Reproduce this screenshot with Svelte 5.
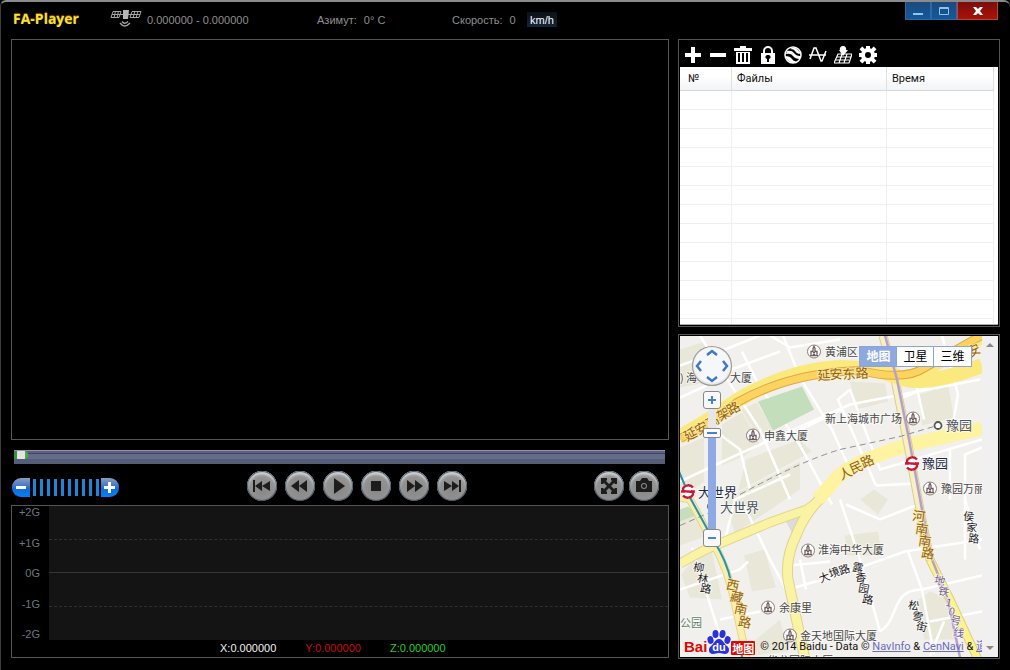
<script>
  let seek = $state(0);
  let volume = $state(100);
  let zoom = $state(83);
  let mapType = $state('地图');

  const rows = Array.from({ length: 12 }, (_, i) => i);
  const mapTypes = ['地图', '卫星', '三维'];
  const axis = ['+2G', '+1G', '0G', '-1G', '-2G'];
  const readings = [
    { text: 'X:0.000000', tone: 'x' },
    { text: 'Y:0.000000', tone: 'y' },
    { text: 'Z:0.000000', tone: 'z' }
  ];

  const tools = [
    { name: 'Добавить', d: 'M7 1h4v6h6v4h-6v6H7v-6H1V7h6z' },
    { name: 'Убрать', d: 'M1 7h16v4H1z' },
    {
      name: 'Удалить',
      d: 'M0 2h6V0h6v2h6v3H0zM2 6h14v12H2zM4 7v9h2V7zM8 7v9h2V7zM12 7v9h2V7z'
    },
    {
      name: 'Защитить',
      d: 'M2 7h2V5a5 5 0 0 1 10 0v2h2v11H2zM6 7h6V5a3 3 0 0 0-6 0zM9 9a2 2 0 0 0-1 4v3h2v-3a2 2 0 0 0-1-4z'
    },
    { name: 'Карта', kind: 'globe' },
    { name: 'График', kind: 'wave' },
    { name: 'Маршрут', kind: 'route' },
    { name: 'Настройки', kind: 'gear' }
  ];

  const transport = [
    { name: 'В начало', d: 'M6 9h2v12H6zM15 10v10l-7-5zM23 10v10l-8-5z' },
    { name: 'Назад', d: 'M14 9v12l-8-6zM22 9v12l-8-6z' },
    { name: 'Пуск', d: 'M11 7l11 8-11 8z' },
    { name: 'Стоп', d: 'M10 10h10v10H10z' },
    { name: 'Вперёд', d: 'M8 9l8 6-8 6zM16 9l8 6-8 6z' },
    { name: 'В конец', d: 'M7 10l8 5-8 5zM15 10l7 5-7 5zM22 9h2v12h-2z' }
  ];

  const extras = [
    {
      name: 'Во весь экран',
      d: 'M7 7h6v2l-1 1 3 3 3-3-1-1V7h6v6h-2l-1-1-3 3 3 3 1-1h2v6h-6v-2l1-1-3-3-3 3 1 1v2H7v-6h2l1 1 3-3-3-3-1 1H7z'
    },
    {
      name: 'Снимок',
      d: 'M7 10h4l2-3h5l2 3h3v11H7zM15 12a3 3 0 1 0 0 6 3 3 0 0 0 0-6zM15 13a2 2 0 1 1 0 4 2 2 0 0 1 0-4z'
    }
  ];

  const blocks = [
    '680,350 705,342 728,372 700,384 680,388',
    '741,410 757,403 775,434 760,440',
    '722,425 742,413 760,444 745,456 722,466',
    '680,448 704,438 704,482 680,500',
    '746,460 800,440 812,452 738,492',
    '724,500 800,462 800,490 735,534',
    '920,395 948,385 954,418 922,426',
    '860,500 874,490 888,500 878,515',
    '845,536 878,532 882,556 846,556',
    '681,575 694,560 712,552 722,600 690,598',
    '744,556 764,550 776,588 752,592',
    '680,512 700,508 708,536 680,546',
    '918,600 930,592 945,598 958,640 924,640',
    '850,382 885,384 888,402 856,410',
    '756,640 780,620 788,652 756,656'
  ];

  const streets = [
    'M680 366L730 348L760 336', 'M700 336L722 372L760 430L790 500', 'M680 398L720 380',
    'M742 352L758 384L800 446L832 505', 'M726 372L780 352', 'M783 336L800 378L832 430L850 470',
    'M680 482L740 454L850 405L980 380', 'M780 440L842 410', 'M850 390L880 470L982 440',
    'M850 390L838 400L876 486', 'M942 336L958 395L950 440', 'M903 398L980 366', 'M916 384L924 420',
    'M840 380L900 360', 'M840 500L860 560L880 632', 'M788 590L840 575L905 552L982 540',
    'M744 506L770 560L786 590', 'M880 632C900 620 890 590 922 590L982 576',
    'M876 486L916 484', 'M950 450L950 500M982 448L965 455L965 560', 'M965 500L980 550',
    'M930 622L982 612', 'M692 548L718 630L735 650', 'M680 590L740 570L748 562',
    'M720 620L760 612', 'M908 552L922 590L934 655', 'M944 622L930 656', 'M800 560L806 590',
    'M790 566L830 562', 'M725 540L735 500L790 475', 'M846 505L880 520L918 505',
    'M770 336L790 348L840 340', 'M700 420L740 450L750 490'
  ];

  const pois = [
    [814, 352], [753, 436], [913, 419], [808, 551], [790, 636], [768, 608], [930, 489]
  ];

  const places = [
    { t: '黄浦区', x: 825, y: 356 },
    { t: '海', x: 686, y: 382 },
    { t: '大厦', x: 730, y: 382 },
    { t: '申鑫大厦', x: 764, y: 440 },
    { t: '新上海城市广场', x: 825, y: 423 },
    { t: '豫园万丽', x: 941, y: 493 },
    { t: '淮海中华大厦', x: 818, y: 554 },
    { t: '余康里', x: 779, y: 612 },
    { t: '金天地国际大厦', x: 800, y: 640 },
    { t: '华龙国际大厦', x: 767, y: 665 },
    { t: '公园', x: 680, y: 627, c: 'park' }
  ];

  const stations = [
    { t: '豫园', x: 946, y: 430, c: 'soft' },
    { t: '豫园', x: 922, y: 468 },
    { t: '大世界', x: 698, y: 497 },
    { t: '大世界', x: 720, y: 512, c: 'soft' }
  ];

  // Street names drawn one sign after another along the road.
  const roadNames = [
    { c: 'major', r: -29, s: [['延', 690, 434], ['安', 701, 428], ['高', 712, 421], ['架', 723, 414], ['路', 733, 408]] },
    { c: 'major', r: -3, s: [['延', 824, 375], ['安', 836, 374], ['东', 849, 374], ['路', 862, 373]] },
    { c: 'major', r: -24, s: [['人', 845, 473], ['民', 856, 467], ['路', 867, 461]] },
    { c: 'major', r: 8, s: [['河', 919, 516], ['南', 922, 529], ['南', 925, 541], ['路', 928, 553]] },
    { c: 'major', r: 12, s: [['西', 733, 585], ['藏', 737, 597], ['南', 741, 609], ['路', 745, 622]] },
    { c: 'minor', r: 10, s: [['柳', 699, 567], ['林', 703, 578], ['路', 706, 588]] },
    { c: 'minor', r: -20, s: [['大', 824, 577], ['境', 834, 572], ['路', 844, 569]] },
    { c: 'minor', r: 10, s: [['露', 858, 567], ['香', 861, 577], ['园', 864, 588], ['路', 868, 599]] },
    { c: 'minor', r: 5, s: [['侯', 969, 516], ['家', 972, 527], ['路', 974, 538]] },
    { c: 'minor', r: 12, s: [['松', 914, 605], ['雪', 918, 616], ['街', 922, 626]] },
    { c: 'metro', r: 12, s: [['地', 940, 580], ['铁', 944, 591], ['1', 949, 602], ['0', 952, 611], ['号', 956, 620], ['线', 959, 632]] }
  ];
</script>

<main class="window">
  <header>
    <h1>FA-Player</h1>
    <div class="gps">
      <svg width="32" height="18" viewBox="0 0 32 18" aria-hidden="true">
        <g fill="none" stroke="#a4a4a4">
          <path d="M3 2.500h8l-2 6H1zM2 5.500h8M5.500 2L4 9M8.500 2L7 9M22 2.500h9l-2 6h-9zM21 5.500h9M25 2l-2 7M28 2l-2 7" />
          <path d="M10 5.500h11" />
          <path d="M10 14Q14.500 20 20 14M12 12.500Q14.500 16 18 12.500" stroke-width="1.300" />
        </g>
        <path d="M13 1h6l-1 9h-5z" fill="#b5b5b5" />
      </svg>
      <span>0.000000 - 0.000000</span>
    </div>
    <p class="azimuth"><span>Азимут:</span><span>0° C</span></p>
    <p class="speed"><label for="unit">Скорость:</label><span>0</span></p>
    <select id="unit"><option>km/h</option><option>mph</option></select>
    <div class="winbuttons">
      <button type="button" aria-label="Свернуть">
        <svg width="12" height="10" viewBox="0 0 12 10"><path d="M1 7h10v2H1z" fill="#8fc4ee" /></svg>
      </button>
      <button type="button" aria-label="Развернуть">
        <svg width="12" height="10" viewBox="0 0 12 10"><path d="M1.500 1.500h9v7h-9zM1 2.500h10" fill="none" stroke="#8fc4ee" /></svg>
      </button>
      <button type="button" class="close" aria-label="Закрыть">
        <svg width="12" height="10" viewBox="0 0 12 10"><path d="M1 1h3l2 2 2-2h3L8 5l3 4H8L6 7 4 9H1l3-4z" fill="#fff" /></svg>
      </button>
    </div>
  </header>

  <div class="columns">
    <section class="left">
      <div class="video frame"></div>

      <input class="seek" type="range" aria-label="Позиция" min="0" max="100" bind:value={seek} />

      <div class="controls">
        <div class="volume">
          <button type="button" class="vol down" aria-label="Тише">
            <svg width="18" height="19" viewBox="0 0 18 19"><path d="M4 8h10v3H4z" fill="#fff" /></svg>
          </button>
          <input type="range" aria-label="Громкость" min="0" max="100" bind:value={volume} />
          <button type="button" class="vol up" aria-label="Громче">
            <svg width="18" height="19" viewBox="0 0 18 19"><path d="M7 4h3v4h4v3h-4v4H7v-4H3V8h4z" fill="#fff" /></svg>
          </button>
        </div>
        <div class="transport">
          {#each transport as b}
            <button type="button" class="round" aria-label={b.name}>
              <svg width="30" height="30" viewBox="0 0 30 30"><path d={b.d} /></svg>
            </button>
          {/each}
        </div>
        <div class="extras">
          {#each extras as b}
            <button type="button" class="round" aria-label={b.name}>
              <svg width="30" height="30" viewBox="0 0 30 30"><path fill-rule="evenodd" d={b.d} /></svg>
            </button>
          {/each}
        </div>
      </div>

      <div class="graph frame">
        <div class="axis">
          {#each axis as a}<span>{a}</span>{/each}
        </div>
        <div class="plot"><i></i><i class="zero"></i><i></i><i class="end"></i></div>
        <div class="readings">
          {#each readings as r}<span class={r.tone}>{r.text}</span>{/each}
        </div>
      </div>
    </section>

    <aside class="right">
      <div class="files frame">
        <div class="tools">
          {#each tools as t}
            <button type="button" aria-label={t.name}>
              <svg width="18" height="18" viewBox="0 0 18 18">
                {#if t.kind === 'globe'}
                  <circle cx="9" cy="9" r="8" fill="none" stroke="#fff" stroke-width="1.500" />
                  <path d="M3 5Q8 4 10 7T16 10V13Q11 13 9 10T2 8zM8 2Q12 1 14 4T17 7L15 8Q12 7 11 5T6 3zM1 10Q6 10 8 13T13 15L9 17Q4 16 1 10z" fill="#fff" />
                {:else if t.kind === 'wave'}
                  <path d="M0 9h17M1 13L5 2h2L12 15h1L17 5" fill="none" stroke="#fff" stroke-width="1.500" />
                {:else if t.kind === 'route'}
                  <path d="M4 8h14l-3 9H0zM3 11h14M1 14h14M8 8l-3 9M13 8l-3 9" fill="none" stroke="#fff" stroke-width="1.200" />
                  <path d="M9 0a3 3 0 0 1 3 4h2L9 10 5 4h1a3 3 0 0 1 3-4z" fill="#fff" />
                {:else if t.kind === 'gear'}
                  <g fill="#fff">
                    <path d="M7 0h4v18H7zM0 7h18v4H0z" />
                    <path d="M7 -1h4v20H7zM-1 7h20v4H-1z" transform="rotate(45 9 9)" />
                    <circle cx="9" cy="9" r="7" />
                  </g>
                  <circle cx="9" cy="9" r="3" fill="#000" />
                {:else}
                  <path fill="#fff" fill-rule="evenodd" d={t.d} />
                {/if}
              </svg>
            </button>
          {/each}
        </div>
        <div class="list">
          <table>
            <colgroup><col class="num" /><col /><col class="time" /></colgroup>
            <thead><tr><th>№</th><th>Файлы</th><th>Время</th></tr></thead>
            <tbody>
              {#each rows as r (r)}<tr><td></td><td></td><td></td></tr>{/each}
              <tr class="rest"><td></td><td></td><td></td></tr>
            </tbody>
          </table>
        </div>
      </div>

      <div class="map frame">
        <div class="canvas">
          <svg class="drawing" viewBox="680 336 302 322" preserveAspectRatio="xMidYMid slice" role="img" aria-label="豫园">
            <rect x="680" y="336" width="302" height="322" fill="#f2f0ed" />
            {#each blocks as b}<polygon points={b} fill="#e9e7d8" />{/each}
            <polygon points="680,510 688,507 698,515 680,522" fill="#c5dfbd" />
            <polygon points="782,515 800,514 803,525 794,537" fill="#dedcda" />
            {#each streets as s}<path d={s} fill="none" stroke="#fff" stroke-width="2.500" />{/each}
            <polygon points="758,402 802,387 814,410 773,431" fill="#c3debb" />

            <g fill="none">
              <path d="M680 564Q704 550 722 543L770 523Q795 514 807 510L822 499" stroke="#e0d693" stroke-width="10" />
              <path d="M680 498L690 500L713 543Q728 570 734 600L747 660" stroke="#e0d693" stroke-width="8" />
              <path d="M982 430L914 444Q860 459 838 477L820 499Q804 516 797 534Q785 558 788 580L805 660" stroke="#ddd28f" stroke-width="11" />
              <path d="M680 564Q704 550 722 543L770 523Q795 514 807 510L822 499" stroke="#fbf3a4" stroke-width="8" />
              <path d="M680 498L690 500L713 543Q728 570 734 600L747 660" stroke="#faefaa" stroke-width="6" />
              <path d="M820 499Q804 516 797 534Q785 558 788 580L805 660" stroke="#fbf3a4" stroke-width="9" />
              <path d="M982 429L914 444Q860 459 838 477L818 500" stroke="#fdf3a0" stroke-width="14" />
              <path d="M883 336L895 380L907 440L920 510L930 560L950 600L978 660" stroke="#d9cd92" stroke-width="9" />
              <path d="M883 336L895 380L907 440L920 510L930 560" stroke="#f7f0c4" stroke-width="7" />
              <path d="M930 560L950 600L978 660" stroke="#fdf388" stroke-width="7" />

              <path d="M680 437Q705 424 737 401Q790 370 840 368Q875 368 900 378T982 366" stroke="#fbe97d" stroke-width="15" />
              <path d="M900 378Q925 374 945 360L986 336" stroke="#fbe97d" stroke-width="12" />
              <path d="M680 439Q708 426 737 403Q790 373 860 371Q905 382 925 368L985 334" stroke="#dca843" stroke-width="9" />
              <path d="M680 439Q708 426 737 403Q790 373 860 371Q905 382 925 368L985 334" stroke="#fcd35f" stroke-width="7" />

              <path d="M885 336L897 380L909 440L922 510L932 560L948 600L960 658" stroke="#b6a0cb" stroke-width="2.500" />
              <path d="M740 495Q800 462 840 450L900 437L934 427" stroke="#8f8f8f" stroke-dasharray="6 4" />
              <path d="M680 526L712 512" stroke="#8f8f8f" stroke-dasharray="6 4" />
              <path d="M679 472L690 498L713 540Q727 562 731 582M741 645L742 660" stroke="#2291b5" stroke-width="2" />
            </g>

            {#each pois as [x, y]}
              <g transform="translate({x} {y})">
                <circle r="6.500" fill="#fff" stroke="#8d7e7c" />
                <path d="M-4 4h8M-3 3v-3h2v-3l1-2 1 2v3h2v3M-1 1h2M-1 3h2" fill="none" stroke="#6f5c5b" stroke-width="1.300" />
              </g>
            {/each}
            <circle cx="938" cy="426" r="3.500" fill="#fff" stroke="#555" stroke-width="1.800" />
            <circle cx="711" cy="507" r="3" fill="#fff" stroke="#555" stroke-width="1.800" />
            {#each [[912, 464], [688, 492]] as [x, y]}
              <g transform="translate({x} {y})">
                <circle r="7" fill="#fff" />
                <path d="M5 -4A6 6 0 0 0 -5 -3Q-6 0 0 0T5 3A6 6 0 0 1 -5 4M-7 0H-3M3 0H7" fill="none" stroke="#ca1837" stroke-width="2.300" />
              </g>
            {/each}

            {#each places as p}<text class="place {p.c ?? ''}" x={p.x} y={p.y}>{p.t}</text>{/each}
            {#each stations as p}<text class="station {p.c ?? ''}" x={p.x} y={p.y}>{p.t}</text>{/each}
            {#each roadNames as n}
              {#each n.s as [ch, x, y]}
                <text class="road {n.c}" text-anchor="middle" dominant-baseline="central" transform="translate({x} {y}) rotate({n.r})">{ch}</text>
              {/each}
            {/each}
            <text class="place" x="680" y="382">)</text>
            <text class="road major" x="967" y="355" transform="rotate(-25 975 350)">安</text>
          </svg>

          <div class="nav">
            <button type="button" class="pan" aria-label="Сдвинуть карту">
              <svg width="40" height="40" viewBox="0 0 40 40">
                <path d="M15 9l5-4 5 4M15 31l5 4 5-4M9 15l-4 5 4 5M31 15l4 5-4 5" fill="none" stroke="#3f75d0" stroke-width="2.500" />
              </svg>
            </button>
            <button type="button" class="step" aria-label="Приблизить">
              <svg width="16" height="16" viewBox="0 0 16 16"><path d="M4 8h8M8 4v8" stroke="#4a80da" stroke-width="2" /></svg>
            </button>
            <input type="range" aria-label="Масштаб" min="0" max="100" bind:value={zoom} />
            <button type="button" class="step" aria-label="Отдалить">
              <svg width="16" height="16" viewBox="0 0 16 16"><path d="M4 8h8" stroke="#4a80da" stroke-width="2" /></svg>
            </button>
          </div>

          <div class="types">
            {#each mapTypes as t}
              <button type="button" class:on={mapType === t} onclick={() => (mapType = t)}>{t}</button>
            {/each}
          </div>

          <div class="credit">
            <span class="logo">
              <b>Bai</b>
              <svg width="24" height="26" viewBox="0 0 24 26" aria-hidden="true">
                <g fill="#2a32d8">
                  <ellipse cx="3.500" cy="11" rx="3" ry="4" transform="rotate(-15 3.500 11)" />
                  <ellipse cx="8.500" cy="5" rx="3" ry="4" />
                  <ellipse cx="15.500" cy="5" rx="3" ry="4" transform="rotate(10 15.500 5)" />
                  <ellipse cx="20.500" cy="11" rx="3" ry="4" transform="rotate(15 20.500 11)" />
                  <path d="M12 10c4 0 5 5 8 7s3 8-2 8c-3 0-3-1-6-1s-3 1-6 1c-5 0-5-6-2-8s4-7 8-7z" />
                </g>
                <text x="12" y="22" text-anchor="middle" class="du">du</text>
              </svg>
              <b class="tag">地图</b>
            </span>
            <span class="legal">© 2014 Baidu - Data © <a href="#navinfo">NavInfo</a> &amp; <a href="#cennavi">CenNavi</a> &amp; <a href="#dao">道</a></span>
          </div>
        </div>
        <div class="scroll" aria-hidden="true"><i class="upper"></i><i class="lower"></i></div>
      </div>
    </aside>
  </div>
</main>

<style>
  :global(body) {
    margin: 0;
    background: #000;
  }

  .window {
    box-sizing: border-box;
    min-height: 100vh;
    display: flex;
    flex-direction: column;
    padding: 0 10px 11px;
    background: #000;
    border-top: 2px solid #8b8b8b;
    border-left: 1px solid #3c3c3c;
    border-radius: 6px 6px 0 0;
    color: #8f8f8f;
    font: 11px/14px "Liberation Sans", "Noto Sans CJK SC", sans-serif;
  }

  button,
  select,
  input {
    margin: 0;
    padding: 0;
    border: 0;
    background: none;
    font: inherit;
    color: inherit;
  }

  button {
    display: flex;
    align-items: center;
    justify-content: center;
  }

  svg {
    display: block;
    flex: none;
  }

  .frame {
    box-sizing: border-box;
    border: 1px solid #555;
  }

  header {
    display: flex;
    align-items: flex-start;
    height: 37px;
  }

  h1 {
    width: 99px;
    margin: 0;
    padding: 9px 0 0 2px;
    box-sizing: border-box;
    font: bold 14px/16px "Open Sans", "Noto Sans", sans-serif;
    color: #f3e42b;
    text-shadow: 0 -1px 1px #9c4a00;
  }

  .gps {
    display: flex;
    gap: 5px;
    width: 207px;
    padding-top: 7px;
  }

  .gps span {
    padding-top: 4px;
  }

  header p {
    display: flex;
    gap: 7px;
    margin: 0;
    padding-top: 11px;
  }

  .azimuth {
    width: 135px;
  }

  .speed {
    width: 75px;
  }

  select {
    appearance: none;
    width: 30px;
    height: 15px;
    margin-top: 10px;
    padding: 0 3px;
    background: linear-gradient(#0c1116, #12263a);
    color: #fff;
  }

  .winbuttons {
    display: flex;
    margin: 0 2px 0 auto;
  }

  .winbuttons button {
    box-sizing: border-box;
    width: 26px;
    height: 18px;
    background: linear-gradient(#1c4a7c, #14589b);
    border: 1px solid #2d6aa2;
    border-top: 0;
  }

  .winbuttons .close {
    width: 41px;
    background: linear-gradient(#7c0c0c, #a81408);
    border-color: #b5453a;
  }

  .columns {
    flex: 1;
    display: grid;
    grid-template-columns: minmax(0, 1fr) 322px;
    gap: 9px;
  }

  .left,
  .right {
    display: flex;
    flex-direction: column;
    min-width: 0;
  }

  .left {
    padding-bottom: 1px;
  }

  .video {
    flex: 1;
    min-height: 200px;
  }

  .seek {
    appearance: none;
    display: block;
    height: 14px;
    margin: 10px 4px 7px 3px;
    background: linear-gradient(#9093b2 0 1px, #5d6080 1px 3px, #41445f 3px 4px, #646c88 4px 9px, #555d77 9px);
  }

  .seek::-webkit-slider-thumb {
    appearance: none;
    width: 14px;
    height: 8px;
    margin-bottom: 4px;
    border: 0;
    border-radius: 4px;
    background: linear-gradient(90deg, #2f9b31 0 3px, #e4e4e4 3px 11px, #45b03c 11px);
  }

  .controls {
    display: grid;
    grid-template-columns: 236px 1fr auto;
    align-items: center;
    height: 30px;
    margin-bottom: 4px;
  }

  .volume {
    display: flex;
    padding-left: 1px;
    margin-top: 2px;
  }

  .vol {
    width: 18px;
    height: 19px;
    background: linear-gradient(#8b9dc0, #3d74c8 45%, #0a6fe0 55%, #0b7ff0);
  }

  .down {
    border-radius: 9px 0 0 9px;
  }

  .up {
    border-radius: 0 9px 9px 0;
  }

  .volume input {
    appearance: none;
    box-sizing: border-box;
    width: 71px;
    height: 19px;
    padding: 0 3px;
    background: repeating-linear-gradient(90deg, #1d86d8 0 3px, transparent 3px 7px) 3px 1px / 66px 17px no-repeat;
  }

  .volume input::-webkit-slider-thumb {
    appearance: none;
    width: 3px;
    height: 17px;
  }

  .transport {
    display: flex;
    gap: 8px;
  }

  .extras {
    display: flex;
    gap: 5px;
    padding-right: 10px;
  }

  .round {
    width: 30px;
    height: 30px;
    border-radius: 50%;
    background: radial-gradient(circle at 50% 60%, #868686, #949494 55%, #bdbdbd 85%, #8aa0b4);
    box-shadow: inset 0 0 1px 1px #3c5264, inset 0 3px 3px #ddd;
  }

  .round path {
    fill: #1d1d1d;
  }

  .graph {
    display: grid;
    grid-template: 134px 17px / 37px 1fr;
  }

  .axis {
    display: flex;
    flex-direction: column;
    justify-content: space-between;
    align-items: flex-end;
    padding-right: 9px;
    margin: -1px 0;
    color: #6f7681;
  }

  .plot {
    display: flex;
    flex-direction: column;
    background: #141414;
  }

  .plot i {
    flex: 1;
    border-bottom: 1px dashed #303030;
  }

  .plot .zero {
    border-bottom: 1px solid #363636;
  }

  .plot .end {
    border-bottom-color: transparent;
  }

  .readings {
    grid-column: 1 / -1;
    display: flex;
    gap: 29px;
    padding: 1px 0 0 208px;
  }

  .x {
    color: #f2f2f2;
  }

  .y {
    color: #c30d12;
  }

  .z {
    color: #22cf22;
  }

  .right {
    gap: 7px;
  }

  .files {
    flex: 1;
    display: flex;
    flex-direction: column;
    padding: 0 1px 1px;
  }

  .tools {
    display: flex;
    height: 27px;
  }

  .tools button {
    width: 25px;
    padding-top: 3px;
  }

  .list {
    flex: 1;
    display: flex;
    background: #fff;
    padding-right: 4px;
    border-bottom: 1px solid #aaa;
  }

  table {
    flex: 1;
    width: 100%;
    table-layout: fixed;
    border-collapse: separate;
    border-spacing: 0;
  }

  .num {
    width: 52px;
  }

  .time {
    width: 107px;
  }

  th {
    box-sizing: border-box;
    height: 24px;
    padding: 0 0 0 5px;
    border-right: 1px solid #dcdfe4;
    border-bottom: 1px solid #d5d7db;
    background: linear-gradient(#fff 40%, #f3f4f6);
    color: #111;
    font: 11px/20px Roboto, "Noto Sans", sans-serif;
    text-align: left;
  }

  th:first-child {
    padding-left: 8px;
  }

  td {
    box-sizing: border-box;
    height: 19px;
    padding: 0;
    border-right: 1px solid #efefef;
    border-bottom: 1px solid #efefef;
  }

  .rest td {
    height: auto;
    border-bottom: 0;
  }

  .map {
    display: flex;
    height: 325px;
    padding: 1px;
  }

  .canvas {
    position: relative;
    flex: 1;
    min-width: 0;
    overflow: hidden;
  }

  .drawing {
    width: 100%;
    height: 100%;
  }

  .drawing text {
    font-family: "Noto Sans CJK SC", sans-serif;
  }

  .place {
    font-size: 11px;
    fill: #484848;
  }

  .park {
    fill: #5c7f62;
  }

  .station {
    font-size: 13px;
    fill: #1d2b47;
  }

  .soft {
    fill: #4b5462;
  }

  .place,
  .station,
  .road {
    paint-order: stroke;
    stroke: #fff9;
    stroke-width: 2px;
  }

  .major {
    font-size: 13px;
    fill: #94600c;
    stroke: #fdf0b5aa;
  }

  .minor {
    font-size: 11px;
    fill: #222;
  }

  .metro {
    font-size: 11px;
    fill: #755f9e;
  }

  .nav {
    position: absolute;
    top: 10px;
    left: 12px;
    display: flex;
    flex-direction: column;
    align-items: center;
  }

  .pan {
    width: 40px;
    height: 40px;
    margin-bottom: 5px;
    border-radius: 50%;
    background: #f6f7fa;
    box-shadow: inset 0 0 0 1px #999, inset 0 -1px 3px #aaa;
  }

  .step {
    box-sizing: border-box;
    width: 18px;
    height: 18px;
    border: 1px solid #888;
    border-radius: 3px;
    background: #f8f9fc;
  }

  .nav input {
    appearance: none;
    writing-mode: vertical-lr;
    direction: rtl;
    width: 18px;
    height: 120px;
    background: linear-gradient(#e6e6e6 20px, #8fa9e4 20px) center / 8px 100% no-repeat;
  }

  .nav input::-webkit-slider-thumb {
    appearance: none;
    box-sizing: border-box;
    width: 18px;
    height: 10px;
    border: 1px solid #888;
    border-radius: 2px;
    background: linear-gradient(#4a80da, #4a80da) center / 10px 2px no-repeat #fff;
  }

  .types {
    position: absolute;
    top: 10px;
    right: 10px;
    display: flex;
    border: 1px solid #8ba4dc;
  }

  .types button {
    width: 37px;
    height: 19px;
    background: #fff;
    color: #000;
    font-size: 12px;
  }

  .types button + button {
    box-shadow: -1px 0 #8ba4dc;
  }

  .types .on {
    background: #8ea8e0;
    color: #fff;
    font-weight: bold;
  }

  .credit {
    position: absolute;
    left: 4px;
    bottom: 2px;
    display: flex;
    align-items: flex-end;
    gap: 5px;
    color: #111;
    white-space: nowrap;
  }

  .logo {
    display: flex;
    align-items: flex-end;
    color: #e10601;
    font: bold 15px/16px "Liberation Sans", sans-serif;
  }

  .logo .tag {
    padding: 0 1px;
    border-radius: 1px;
    background: #e10601;
    color: #fff;
    font: bold 11px/14px "Noto Sans CJK SC", sans-serif;
  }

  .du {
    fill: #fff;
    font: bold 11px "Liberation Sans", sans-serif;
  }

  .legal {
    padding-bottom: 1px;
    font-family: Roboto, "Noto Sans CJK SC", sans-serif;
  }

  .legal a {
    color: #6a6ac4;
  }

  .scroll {
    display: flex;
    flex-direction: column;
    justify-content: space-between;
    align-items: center;
    width: 16px;
    padding: 7px 0;
    box-sizing: border-box;
    background: #f0f0f0;
  }

  .scroll i {
    border: 4px solid transparent;
  }

  .scroll .upper {
    border-top: 0;
    border-bottom-color: #888;
  }

  .scroll .lower {
    border-bottom: 0;
    border-top-color: #888;
  }
</style>
